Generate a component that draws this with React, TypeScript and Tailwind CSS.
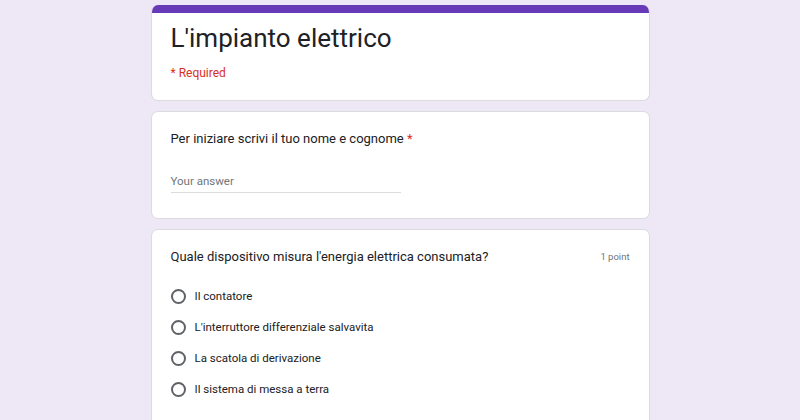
import React from "react";

const options = [
  "Il contatore",
  "L'interruttore differenziale salvavita",
  "La scatola di derivazione",
  "Il sistema di messa a terra",
];

export default function App() {
  return (
    <div
      className="w-[800px] h-[420px] overflow-hidden bg-[#ede7f6] flex flex-col items-center pt-[5px] gap-[10px]"
      style={{ fontFamily: "Roboto, 'Liberation Sans', sans-serif" }}
    >
      <div className="w-[499px] h-[96px] shrink-0 bg-white rounded-[7px] border border-[#dadce0] border-t-0 overflow-hidden flex flex-col">
        <div className="h-[8px] bg-[#673ab7] shrink-0" />
        <div className="px-[19px] pt-[8px]">
          <div className="text-[26px] leading-[34px] text-[#202124]">L'impianto elettrico</div>
          <div className="mt-[10px] text-[12px] leading-[16px] text-[#d93025]">* Required</div>
        </div>
      </div>

      <div className="w-[499px] h-[108px] shrink-0 bg-white rounded-[7px] border border-[#dadce0] px-[19px] pt-[18px]">
        <div className="text-[13px] leading-[18px] text-[#202124]">
          Per iniziare scrivi il tuo nome e cognome <span className="text-[#d93025]">*</span>
        </div>
        <div className="mt-[25px] w-[230px] border-b border-[#dadce0] pb-[3px] text-[11.5px] leading-[16px] text-[#70757a]">
          Your answer
        </div>
      </div>

      <div className="w-[499px] h-[220px] shrink-0 bg-white rounded-[7px] border border-[#dadce0] px-[19px] pt-[18px]">
        <div className="flex items-start justify-between">
          <div className="text-[13px] leading-[18px] text-[#202124]">
            Quale dispositivo misura l'energia elettrica consumata?
          </div>
          <div className="text-[9.5px] leading-[18px] text-[#70757a]">1 point</div>
        </div>
        <div className="mt-[22px] flex flex-col gap-[15px]">
          {options.map((o) => (
            <div key={o} className="flex items-center h-[16px]">
              <div className="w-[15px] h-[15px] rounded-full border-[2px] border-[#5f6368] shrink-0" />
              <div className="ml-[9px] text-[11.5px] leading-[16px] text-[#202124]">{o}</div>
            </div>
          ))}
        </div>
      </div>
    </div>
  );
}
